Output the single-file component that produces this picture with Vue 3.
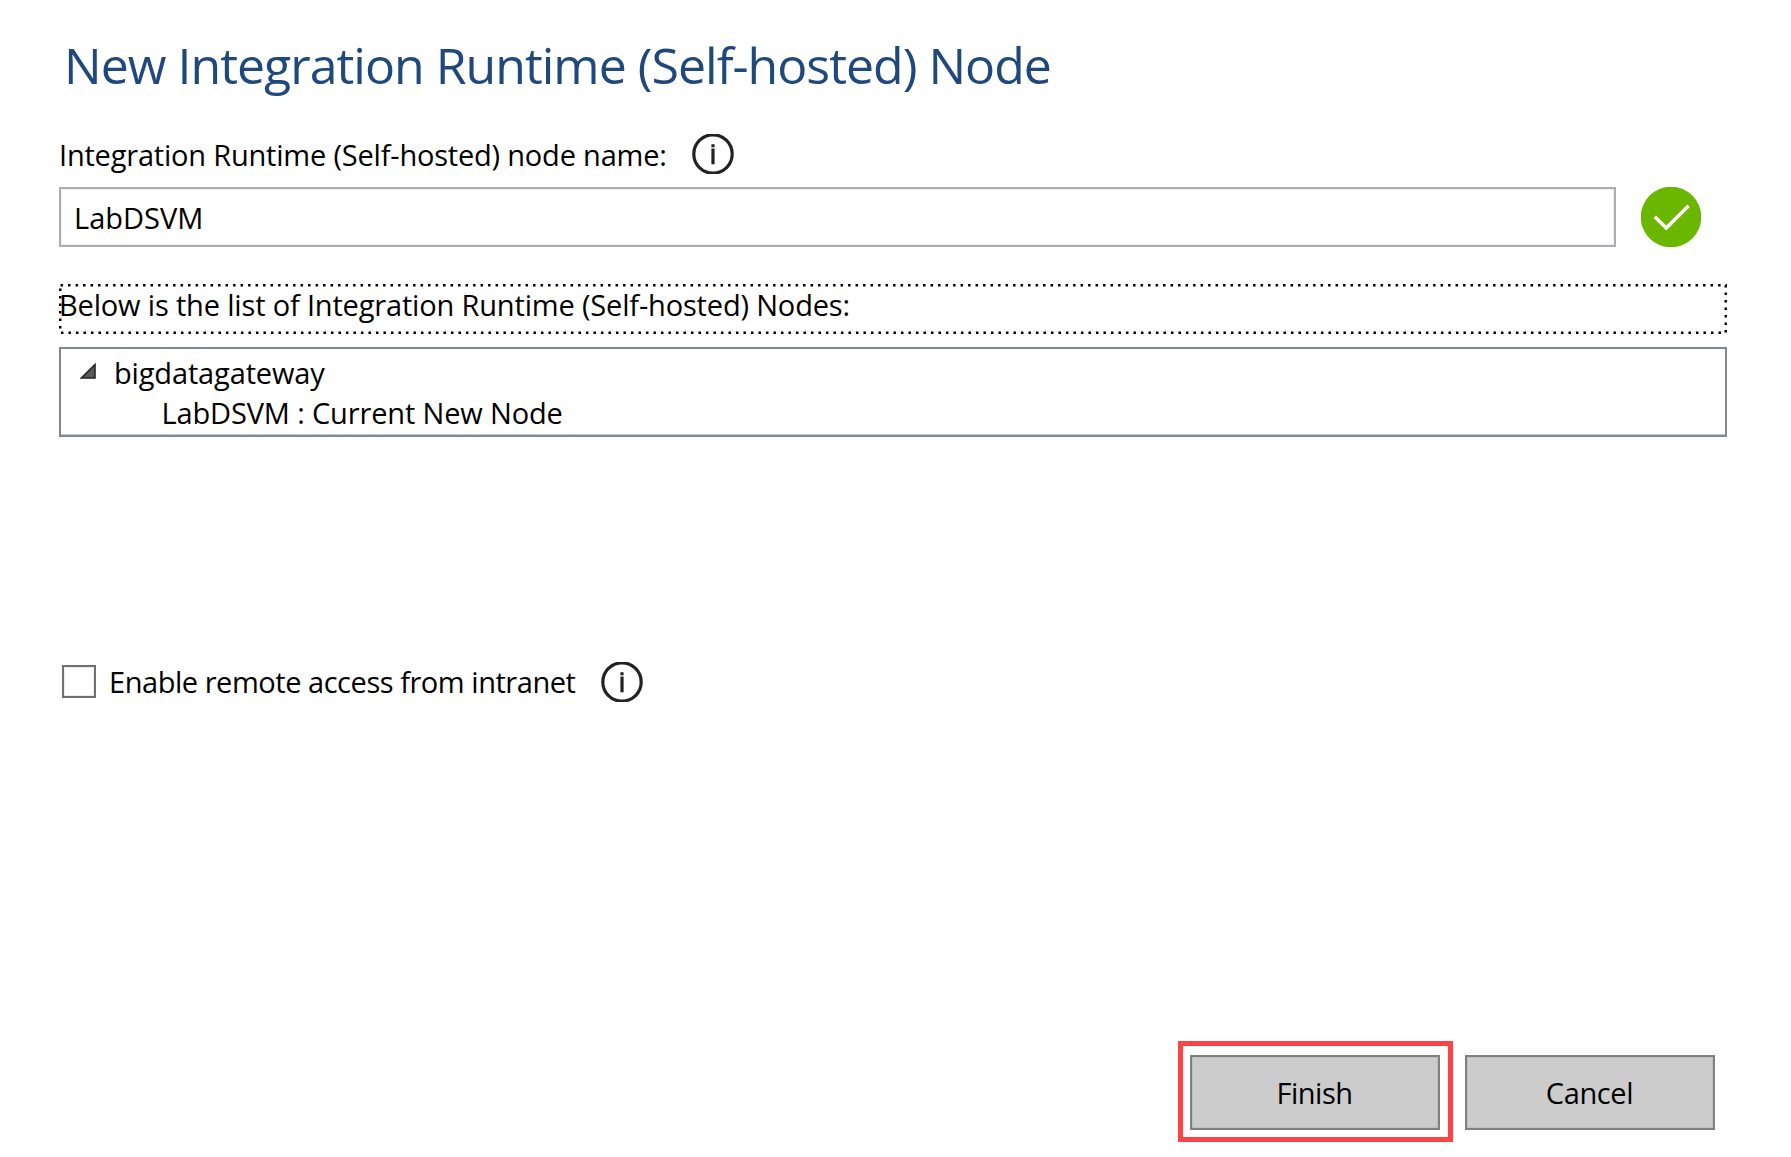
<script setup>
import { ref } from 'vue'

const nodeName = ref('LabDSVM')
const gateway = ref('bigdatagateway')
const remoteAccess = ref(false)
</script>

<template>
  <main class="dialog">
    <h1 class="title">New Integration Runtime (Self-hosted) Node</h1>

    <div class="label-row">
      <span class="label">Integration Runtime (Self-hosted) node name:</span>
      <svg class="info name-info" viewBox="0 0 42 40">
        <circle cx="21" cy="20" r="19.2" />
        <path d="M21 10.3v3M21 14.4v15.8" />
      </svg>
    </div>

    <div class="input-row">
      <div class="input">{{ nodeName }}</div>
      <svg class="check" viewBox="0 0 60 60">
        <circle cx="30" cy="30" r="30.3" />
        <path d="M13.8 29.8L25.3 41L47.6 18.8" />
      </svg>
    </div>

    <div class="list-caption">
      <svg class="focus" viewBox="0 0 1668 50">
        <rect x="1.25" y="1.25" width="1665.5" height="47.5" />
      </svg>
      <span class="caption-text">Below is the list of Integration Runtime (Self-hosted) Nodes:</span>
    </div>

    <div class="tree">
      <div class="tree-row">
        <svg class="expander" viewBox="0 0 16 16">
          <path d="M1.5 15H15V1.5Z" />
        </svg>
        <span class="parent">{{ gateway }}</span>
      </div>
      <div class="tree-row child">{{ nodeName }} : Current New Node</div>
    </div>

    <div class="remote-row">
      <span class="checkbox" role="checkbox" :aria-checked="remoteAccess"></span>
      <span class="remote-label">Enable remote access from intranet</span>
      <svg class="info remote-info" viewBox="0 0 42 40">
        <circle cx="21" cy="20" r="19.2" />
        <path d="M21 10.3v3M21 14.4v15.8" />
      </svg>
    </div>

    <footer class="footer">
      <div class="highlight">
        <button class="btn finish">Finish</button>
      </div>
      <button class="btn cancel">Cancel</button>
    </footer>
  </main>
</template>

<style>
body {
  background: #fff;
  overflow: hidden;
}
</style>

<style scoped>
.dialog {
  box-sizing: border-box;
  width: 1791px;
  height: 1157px;
  padding: 35px 64px 0 59px;
  display: flex;
  flex-direction: column;
  background: #fff;
  color: #000;
  font-family: "Open Sans", "Noto Sans", sans-serif;
  font-size: 29px;
  line-height: 40px;
  letter-spacing: -0.15px;
  white-space: nowrap;
}
.title {
  margin: 0 0 39px 5px;
  font-size: 50px;
  line-height: 60px;
  font-weight: 400;
  letter-spacing: -0.99px;
  color: #1f497d;
}
.label-row {
  display: flex;
  height: 40px;
  margin-bottom: 13px;
}
.label {
  width: 632.5px;
  line-height: 42px;
  letter-spacing: -0.2px;
}
.info {
  width: 42px;
  height: 40px;
  flex: none;
  fill: none;
  stroke: #222;
  stroke-width: 3.2;
}
.input-row {
  display: flex;
  gap: 25px;
  margin-bottom: 37px;
}
.input {
  box-sizing: border-box;
  width: 1557px;
  height: 60px;
  padding: 1px 0 0 13px;
  border: 2px solid #abadb3;
  box-shadow: inset 0 0 0 1px #f0f0f2;
  line-height: 56px;
  letter-spacing: 0;
}
.check {
  width: 60px;
  height: 60px;
  fill: #6bb700;
}
.check path {
  fill: none;
  stroke: #fff;
  stroke-width: 3.4;
}
.list-caption {
  position: relative;
  height: 50px;
  margin-bottom: 13px;
}
.caption-text {
  display: block;
  line-height: 42px;
  letter-spacing: -0.17px;
}
.focus {
  position: absolute;
  inset: 0;
  width: 1668px;
  height: 50px;
  fill: none;
  stroke: #000;
  stroke-width: 2.5;
  stroke-dasharray: 2.5 5;
  stroke-dashoffset: -0.3;
}
.tree {
  box-sizing: border-box;
  height: 90px;
  padding: 4px 0 0 19px;
  border: 2px solid #828790;
  box-shadow: inset 0 -1px 0 #c4c7cb;
}
.tree-row {
  display: flex;
  height: 40px;
}
.expander {
  width: 16px;
  height: 16px;
  margin: 10px 18px 0 0;
  fill: #595959;
  stroke: #262626;
  stroke-width: 1.6;
}
.child {
  padding-left: 81.5px;
}
.remote-row {
  display: flex;
  height: 40px;
  margin: 225px 0 339px 3px;
}
.checkbox {
  box-sizing: border-box;
  width: 34px;
  height: 33px;
  margin: 3px 13px 0 0;
  border: 2px solid #707070;
  box-shadow: inset 0 0 0 1px #ededed;
}
.remote-label {
  width: 491.5px;
  letter-spacing: -0.46px;
}
.footer {
  display: flex;
  margin-left: 1119px;
  gap: 12px;
}
.highlight {
  box-sizing: border-box;
  width: 275px;
  height: 101px;
  padding: 9px 8px 7px 7px;
  border: 5px solid #ff4343;
}
.btn {
  box-sizing: border-box;
  width: 250px;
  height: 75px;
  padding: 0 1px 0 0;
  border: 2px solid #808080;
  border-radius: 0;
  background: #ccc;
  box-shadow: inset 0 0 0 1px #c0c0c0;
  color: #000;
  font: inherit;
  line-height: 71px;
}
.finish {
  letter-spacing: -0.5px;
}
.cancel {
  margin-top: 14px;
  letter-spacing: -0.38px;
}
</style>
